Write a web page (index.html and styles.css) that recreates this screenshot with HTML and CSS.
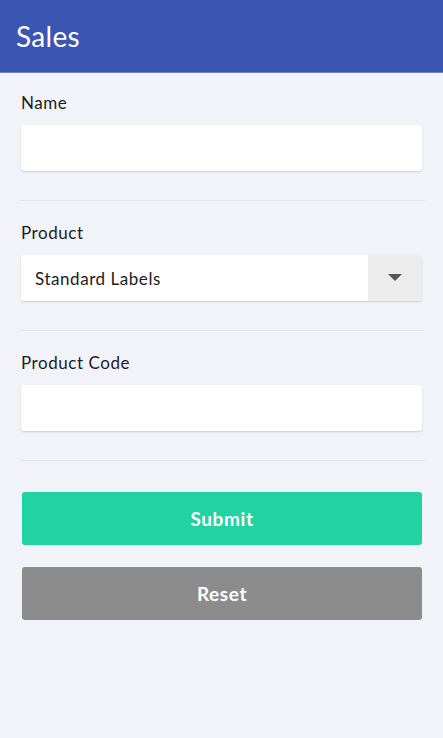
FILE: index.html
```html
<!DOCTYPE html>
<html>
<head>
<meta charset="utf-8">
<link rel="stylesheet" href="styles.css">
</head>
<body>
<header class="topbar"><h1 class="title">Sales</h1></header>
<main class="form">
  <section class="field">
    <label class="label">Name</label>
    <div class="input"></div>
  </section>
  <section class="field">
    <label class="label">Product</label>
    <div class="input select">
      <span class="select-value">Standard Labels</span>
      <span class="select-btn"><svg width="14" height="8" viewBox="0 0 14 8"><path d="M0 0 H14 L7 7 Z" fill="#555"/></svg></span>
    </div>
  </section>
  <section class="field">
    <label class="label">Product Code</label>
    <div class="input"></div>
  </section>
  <div class="actions">
    <button class="btn btn-submit">Submit</button>
    <button class="btn btn-reset">Reset</button>
  </div>
</main>
</body>
</html>
```
FILE: styles.css
```css
html, body { margin: 0; padding: 0; }
body {
  width: 443px;
  height: 738px;
  background: #f2f3f8;
  font-family: Lato, "Open Sans", sans-serif;
  color: #1c1c1c;
  overflow: hidden;
}
.topbar {
  height: 72px;
  background: #3b56b2;
  border-bottom: 1px solid #6a83d3;
  display: flex;
  align-items: center;
  padding: 0 16px;
  box-sizing: content-box;
}
.title {
  margin: 0;
  font-weight: 400;
  font-size: 28px;
  color: #ffffff;
  letter-spacing: 0.3px;
}
.form {
  padding: 19px 18px 0 20px;
}
.field {
  border-bottom: 1px solid #e3e4ea;
  padding-bottom: 29px;
  margin-bottom: 21px;
}
.field + .field { margin-top: 0; }
.label {
  display: block;
  font-size: 17px;
  line-height: 22px;
  margin-bottom: 11px;
  padding-left: 1px;
  letter-spacing: 0.55px;
}
.input {
  margin-left: 1px;
  margin-right: 3px;
  height: 46px;
  background: #fff;
  border-radius: 3px;
  box-shadow: 0 1px 2px rgba(0,0,0,0.16);
}
.select {
  display: flex;
  align-items: stretch;
}
.select-value {
  flex: 1;
  display: flex;
  align-items: center;
  padding-left: 14px;
  font-size: 17px;
  letter-spacing: 0.55px;
}
.select-btn {
  width: 54px;
  background: #ececec;
  border-radius: 0 3px 3px 0;
  display: flex;
  align-items: center;
  justify-content: center;
}
.actions {
  padding-top: 10px;
  display: flex;
  flex-direction: column;
  gap: 22px;
  padding-left: 2px;
  padding-right: 3px;
}
.btn {
  height: 53px;
  border: none;
  border-radius: 3px;
  color: #fff;
  font-family: Lato, "Open Sans", sans-serif;
  font-weight: 700;
  font-size: 19px;
  letter-spacing: 0.6px;
}
.btn-submit { background: #21d2a3; }
.btn-reset { background: #8c8c8c; }
```
